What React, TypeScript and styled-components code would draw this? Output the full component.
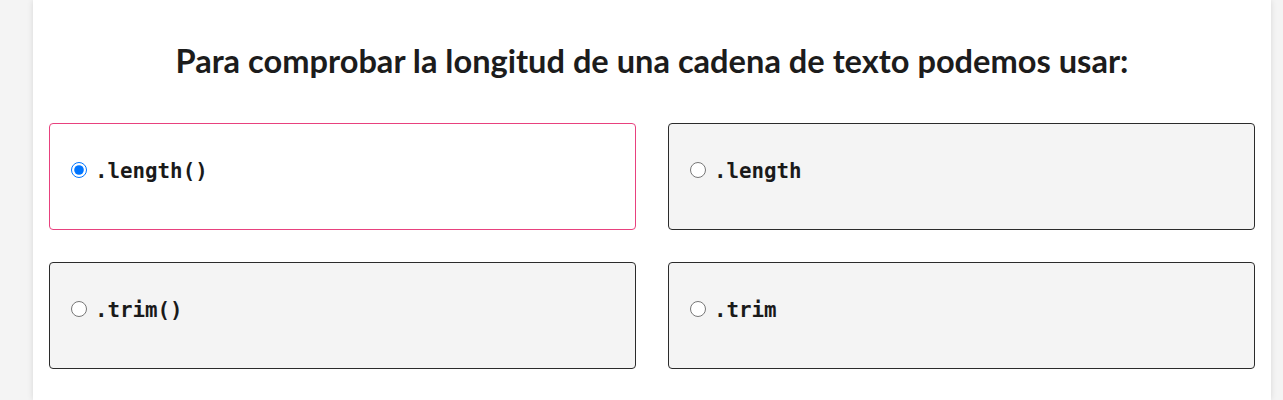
import React from "react";
import styled, { createGlobalStyle } from "styled-components";

const Global = createGlobalStyle`
  html, body { margin: 0; padding: 0; background: #f4f4f4; }
  body { font-family: Lato, "Noto Sans", sans-serif; }
`;

const Page = styled.div`
  width: 1238px;
  margin-left: 33px;
  min-height: 400px;
  background: #ffffff;
  box-shadow: 0 0 6px rgba(0, 0, 0, 0.12);
  padding: 42px 16px 30px;
  box-sizing: border-box;
`;

const Title = styled.h2`
  margin: 0 0 43px;
  font-family: Lato, sans-serif;
  font-weight: 700;
  font-size: 32.6px;
  line-height: 38px;
  color: #1c1c1c;
  text-align: center;
`;

const Grid = styled.div`
  display: grid;
  grid-template-columns: 1fr 1fr;
  column-gap: 32px;
  row-gap: 32px;
`;

const Card = styled.label<{ $selected?: boolean }>`
  box-sizing: border-box;
  height: 107px;
  display: flex;
  align-items: center;
  padding: 0 16px;
  border: 1px solid ${(p) => (p.$selected ? "#e8417e" : "#2b2b2b")};
  border-radius: 4px;
  background: ${(p) => (p.$selected ? "#ffffff" : "#f4f4f4")};
  cursor: pointer;
`;

const Row = styled.div`
  display: flex;
  align-items: center;
  gap: 8px;
  margin-top: -13px;
`;

const Radio = styled.input`
  width: 16px;
  height: 16px;
  margin: 0 0 0 5px;
  flex: none;
`;

const Code = styled.span`
  font-family: "DejaVu Sans Mono", "Liberation Mono", monospace;
  font-weight: bold;
  font-size: 20.8px;
  line-height: 24px;
  color: #1a1a1a;
  position: relative;
  top: 1px;
`;

const options = [".length()", ".length", ".trim()", ".trim"];

export default function App() {
  const [sel, setSel] = React.useState(0);
  return (
    <>
      <Global />
      <Page>
        <Title>Para comprobar la longitud de una cadena de texto podemos usar:</Title>
        <Grid>
          {options.map((o, i) => (
            <Card key={o} $selected={sel === i}>
              <Row>
                <Radio
                  type="radio"
                  name="q"
                  checked={sel === i}
                  onChange={() => setSel(i)}
                />
                <Code>{o}</Code>
              </Row>
            </Card>
          ))}
        </Grid>
      </Page>
    </>
  );
}
